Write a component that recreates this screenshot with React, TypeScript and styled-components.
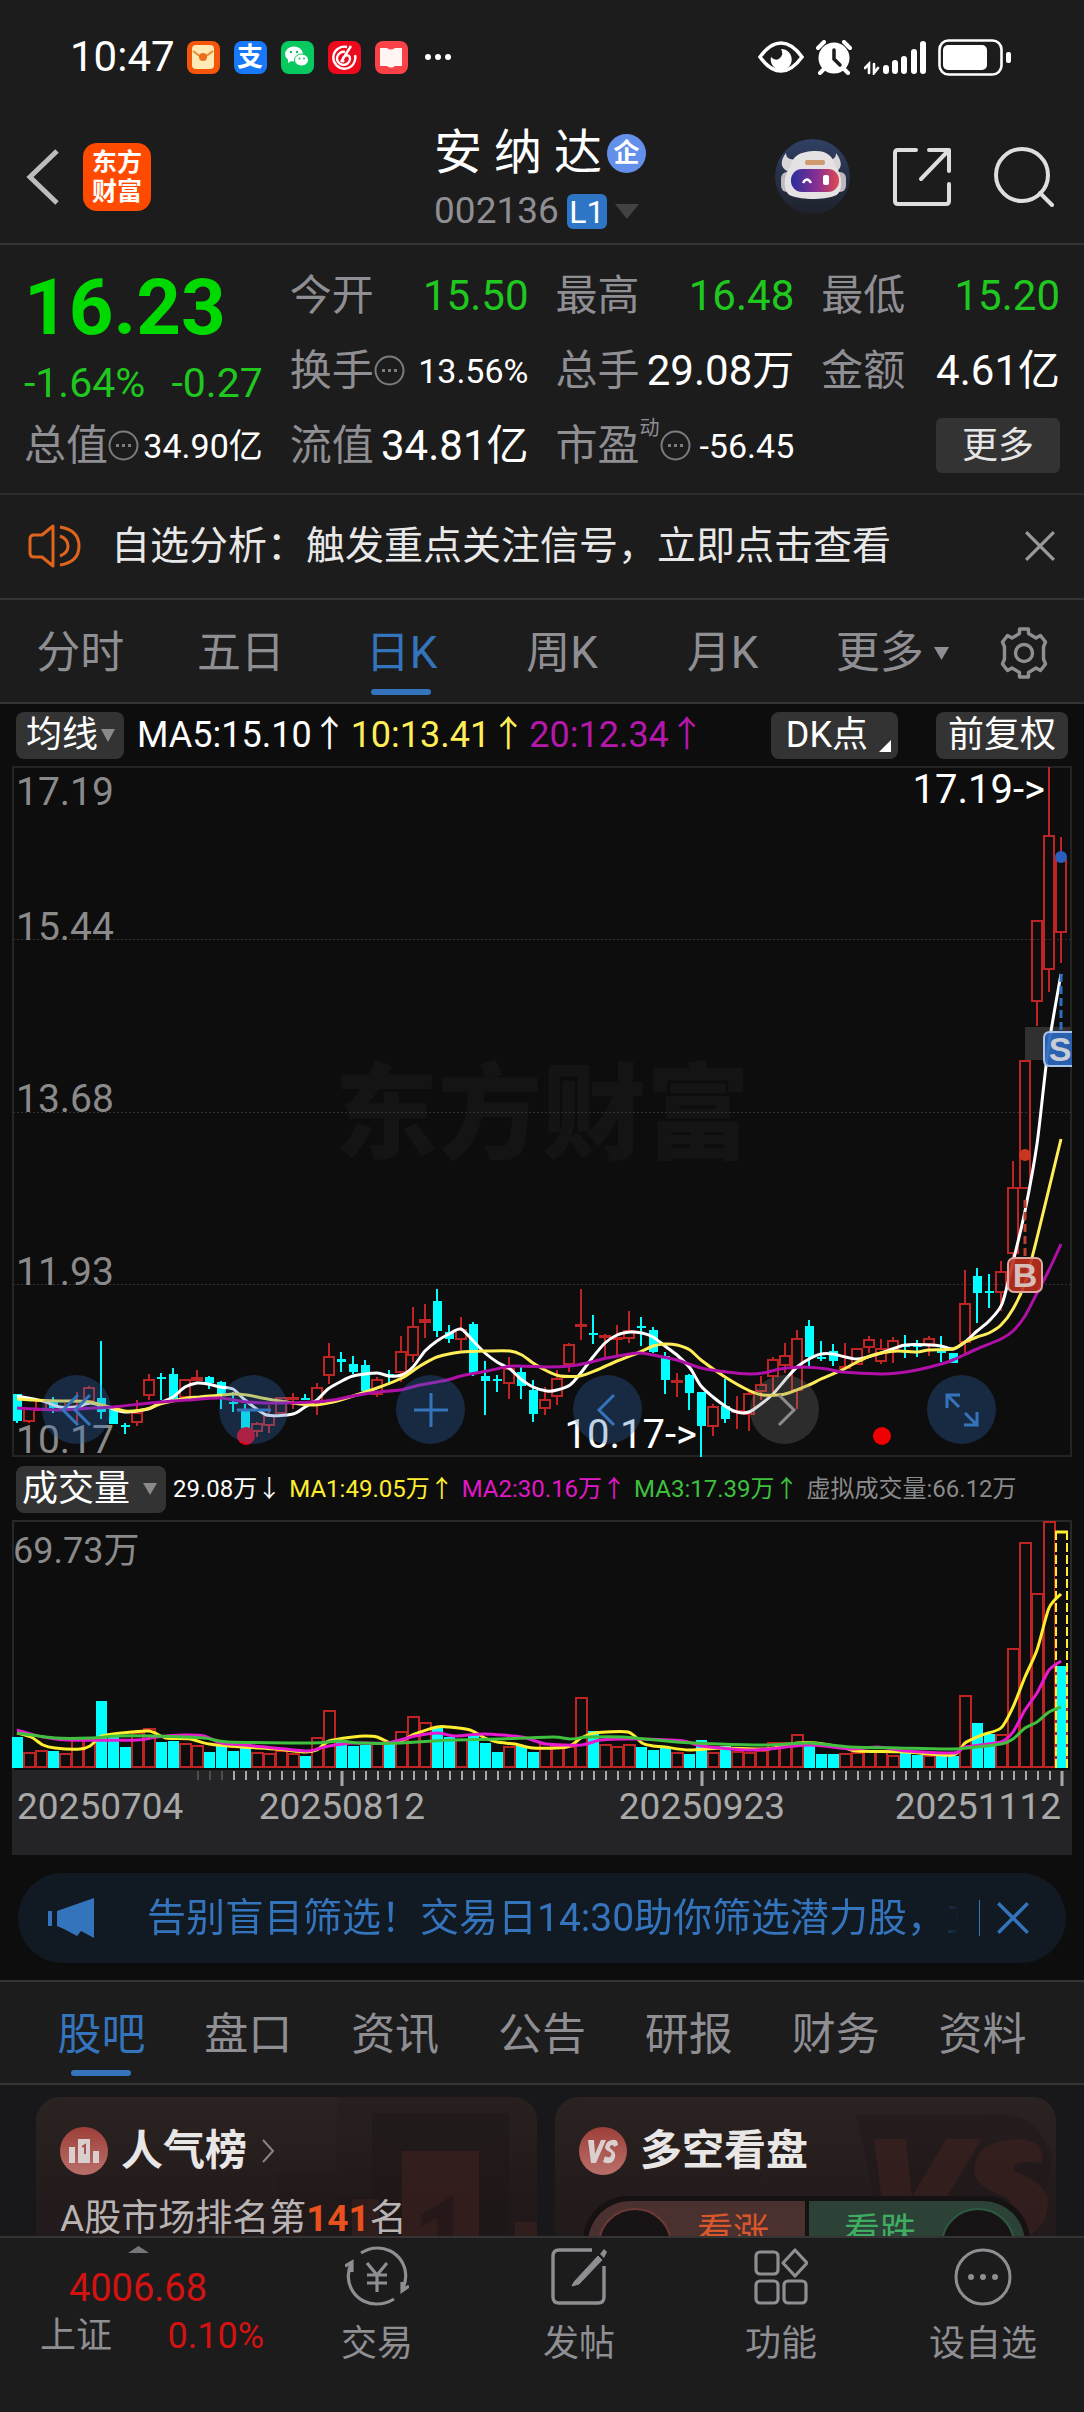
import React from "react";
import styled, { createGlobalStyle } from "styled-components";

const Global = createGlobalStyle`
  *, *::before, *::after { box-sizing: border-box; }
  body { margin: 0; background: #1c1c1c; }
  button { border: 0; padding: 0; background: none; color: inherit; font: inherit; cursor: pointer; }
  svg { display: block; flex: none; }
  h1, h2, p { margin: 0; font-weight: 400; }
`;

const C = {
  bar: "#1c1c1c",
  dark: "#0d0d0d",
  line: "#343434",
  label: "#8e8e93",
  green: "#1fc71f",
  red: "#d31212",
  blue: "#3474bc",
  cyan: "#00ffff",
  candle: "#bf2424",
};

const Screen = styled.div`
  min-height: 100vh;
  display: flex;
  flex-direction: column;
  background: ${C.bar};
  color: #fff;
  font-family: Roboto, "Noto Sans CJK SC", sans-serif;
  font-size: 36px;
  line-height: 48px;
  overflow-x: hidden;
  white-space: nowrap;
`;

/* ---------- status bar ---------- */
const StatusBar = styled.div`
  height: 110px;
  padding: 4px 73px 0 70px;
  display: flex;
  align-items: center;
  justify-content: space-between;
  font-size: 42px;
`;
const StatusGroup = styled.div<{ $gap: number }>`
  display: flex;
  align-items: center;
  gap: ${(p) => p.$gap}px;
`;
const AppTile = styled.span<{ $bg: string }>`
  width: 33px;
  height: 33px;
  border-radius: 8px;
  background: ${(p) => p.$bg};
  display: flex;
  align-items: center;
  justify-content: center;
  font-size: 26px;
  line-height: 33px;
  font-weight: 700;
`;

/* ---------- header ---------- */
const Header = styled.header`
  height: 135px;
  padding: 0 30px 0 26px;
  display: grid;
  grid-template-columns: 1fr auto 1fr;
  align-items: center;
  border-bottom: 2px solid ${C.line};
`;
const HeaderSide = styled.div<{ $end?: boolean; $gap: number }>`
  display: flex;
  align-items: center;
  justify-content: ${(p) => (p.$end ? "flex-end" : "flex-start")};
  gap: ${(p) => p.$gap}px;
`;
const Logo = styled.div`
  width: 68px;
  height: 68px;
  border-radius: 14px;
  background: #ff4a00;
  font-size: 25px;
  line-height: 29px;
  font-weight: 700;
  display: flex;
  flex-direction: column;
  align-items: center;
  justify-content: center;
`;
const TitleBlock = styled.div`
  display: flex;
  flex-direction: column;
  padding-top: 11px;
`;
const TitleRow = styled.div`
  display: flex;
  align-items: center;
  gap: 5px;
  height: 58px;
  h1 { font-size: 48px; line-height: 58px; }
`;
const CodeRow = styled.button`
  display: flex;
  align-items: center;
  gap: 8px;
  height: 58px;
  font-size: 37px;
  color: ${C.label};
`;
const Enterprise = styled.span`
  width: 39px;
  height: 39px;
  border-radius: 50%;
  background: #6390ea;
  text-align: center;
  font-size: 26px;
  line-height: 38px;
  font-weight: 700;
`;
const Level = styled.span`
  width: 40px;
  height: 35px;
  border-radius: 6px;
  background: #2e75c5;
  color: #fff;
  font-size: 32px;
  line-height: 36px;
`;

/* ---------- quote ---------- */
const Quote = styled.section`
  padding: 13px 24px 10px;
  display: grid;
  grid-template-columns: repeat(4, minmax(0, 1fr));
  grid-auto-rows: 75px;
  column-gap: 27px;
  border-bottom: 2px solid #2b2b2b;
`;
const PriceCell = styled.div`
  grid-row: span 2;
  display: flex;
  flex-direction: column;
  justify-content: space-between;
  color: #00d900;
`;
const Price = styled.strong`
  font-size: 78px;
  line-height: 100px;
  font-weight: 700;
`;
const Change = styled.div`
  display: flex;
  justify-content: space-between;
  font-size: 41px;
  line-height: 50px;
  color: ${C.green};
`;
const Cell = styled.div<{ $color?: string; $small?: boolean }>`
  display: flex;
  align-items: center;
  justify-content: space-between;
  color: ${(p) => p.$color ?? "#fff"};
  font-size: ${(p) => (p.$small ? 34 : 42)}px;
`;
const CellLabel = styled.span`
  display: flex;
  align-items: center;
  color: ${C.label};
  font-size: 42px;
  sup {
    align-self: flex-start;
    font-size: 20px;
    line-height: 20px;
    margin-top: -4px;
  }
`;
const MoreCell = styled.div`
  display: flex;
  align-items: center;
  justify-content: flex-end;
`;
const MoreButton = styled.button`
  width: 124px;
  height: 55px;
  border-radius: 6px;
  background: #333;
  color: #e6e6e6;
`;

/* ---------- notice ---------- */
const Notice = styled.section`
  height: 105px;
  padding: 0 28px 2px 28px;
  display: flex;
  align-items: center;
  gap: 29px;
  border-bottom: 2px solid ${C.line};
  color: #e8e8e8;
  font-size: 39px;
  p { flex: 1; }
`;

/* ---------- tabs ---------- */
const PeriodTabs = styled.nav`
  height: 104px;
  display: grid;
  grid-template-columns: repeat(6, 4fr) 3fr;
  border-bottom: 2px solid ${C.line};
`;
const TopicTabs = styled.nav`
  height: 105px;
  padding: 0 28px;
  display: grid;
  grid-template-columns: repeat(7, 1fr);
  border-top: 2px solid ${C.line};
  border-bottom: 2px solid ${C.line};
`;
const Tab = styled.button<{ $active?: boolean; $caret?: boolean }>`
  display: flex;
  align-items: center;
  justify-content: center;
  gap: 10px;
  position: relative;
  padding: 4px 0 0 ${(p) => (p.$caret ? 18 : 0)}px;
  font-size: 44px;
  color: ${(p) => (p.$active ? C.blue : C.label)};
  &::after {
    content: "";
    display: ${(p) => (p.$active ? "block" : "none")};
    position: absolute;
    left: 50%;
    bottom: 7px;
    width: 60px;
    height: 6px;
    margin-left: -30px;
    border-radius: 3px;
    background: ${C.blue};
  }
`;

/* ---------- chart ---------- */
const ChartArea = styled.section`
  background: ${C.dark};
`;
const Toolbar = styled.div`
  height: 62px;
  padding: 0 16px;
  display: flex;
  align-items: center;
`;
const Legend = styled.div<{ $gap: number; $size: number; $start: number }>`
  flex: 1;
  display: flex;
  align-items: center;
  gap: ${(p) => p.$gap}px;
  margin-left: ${(p) => p.$start}px;
  font-size: ${(p) => p.$size}px;
`;
const ToolbarEnd = styled.div`
  display: flex;
  gap: 38px;
`;
const Pill = styled.button<{ $pad: string; $gap?: number }>`
  height: 47px;
  padding: ${(p) => p.$pad};
  display: flex;
  align-items: center;
  gap: ${(p) => p.$gap ?? 0}px;
  border-radius: 8px;
  background: #333;
`;
const Tint = styled.span<{ $c: string }>`
  color: ${(p) => p.$c};
`;
const Plot = styled.div`
  position: relative;
  > svg { width: 100%; height: auto; }
`;
const PlotControls = styled.div`
  position: absolute;
  left: 0;
  right: 0;
  bottom: 14px;
  padding: 0 88px 0 42px;
  display: flex;
  justify-content: space-between;
`;
const Round = styled.button<{ $off?: boolean }>`
  width: 69px;
  height: 69px;
  border-radius: 50%;
  display: flex;
  align-items: center;
  justify-content: center;
  background: ${(p) => (p.$off ? "rgba(130,130,130,.27)" : "rgba(50,110,187,.3)")};
  color: ${(p) => (p.$off ? "#8c8c8c" : C.blue)};
`;

/* ---------- banner ---------- */
const BannerWrap = styled.div`
  padding: 18px 18px 17px;
  background: ${C.dark};
`;
const Banner = styled.div`
  height: 90px;
  padding: 0 36px 0 30px;
  display: flex;
  align-items: center;
  border-radius: 45px;
  background: #111a23;
  color: ${C.blue};
  font-size: 39px;
`;
const BannerText = styled.p`
  flex: 1;
  min-width: 0;
  margin-left: 53px;
  overflow: hidden;
  mask-image: linear-gradient(90deg, #000 calc(100% - 48px), transparent calc(100% - 8px));
`;
const BannerClose = styled.button`
  margin-left: 12px;
  padding-left: 16px;
  height: 36px;
  display: flex;
  align-items: center;
  border-left: 1px solid ${C.blue};
`;

/* ---------- cards ---------- */
const Cards = styled.section`
  flex: 1 0 151px;
  height: 151px;
  padding: 12px 28px 0 36px;
  display: grid;
  grid-template-columns: 1fr 1fr;
  gap: 18px;
  overflow: hidden;
  background: #18181a;
`;
const Card = styled.article`
  position: relative;
  height: 240px;
  padding: 28px 24px 0;
  border-radius: 24px;
  overflow: hidden;
  background: linear-gradient(#2b2321, #231b1b 110px);
`;
const CardArt = styled.svg`
  position: absolute;
  right: 0;
  top: 0;
`;
const CardHead = styled.div`
  position: relative;
  display: flex;
  align-items: center;
  gap: 13px;
  height: 52px;
  h2 { font-size: 42px; line-height: 48px; font-weight: 700; color: #e9e6e6; }
`;
const CardLine = styled.p`
  position: relative;
  margin-top: 18px;
  font-size: 37px;
  color: #b9b4b4;
  strong { color: #e8501e; font-weight: 700; }
`;
const Vote = styled.div`
  position: relative;
  margin: 19px 2px 0 4px;
  height: 90px;
  padding: 5px 5px 0;
  border-radius: 45px 45px 0 0;
  background: #161112;
  display: grid;
  grid-template-columns: 1fr 1fr;
  gap: 4px;
`;
const VoteSide = styled.button<{ $up?: boolean }>`
  display: flex;
  flex-direction: ${(p) => (p.$up ? "row" : "row-reverse")};
  align-items: flex-start;
  gap: 25px;
  padding: 7px 10px 0;
  overflow: hidden;
  border-radius: ${(p) => (p.$up ? "42px 0 0 0" : "0 42px 0 0")};
  background: ${(p) => (p.$up ? "#4a302f" : "#2c4237")};
  color: ${(p) => (p.$up ? "#d9572b" : "#3fae62")};
  &::before {
    content: "";
    width: 74px;
    height: 74px;
    border-radius: 50%;
    border: 2px solid ${(p) => (p.$up ? "#6b3a36" : "#2b5a41")};
    background: #171314;
  }
`;

/* ---------- bottom bar ---------- */
const BottomBar = styled.footer`
  height: 176px;
  display: grid;
  grid-template-columns: 276fr repeat(4, 202fr);
  border-top: 2px solid ${C.line};
`;
const IndexBox = styled.button`
  display: flex;
  flex-direction: column;
  align-items: center;
  padding-top: 8px;
  color: ${C.red};
`;
const IndexValue = styled.span`
  margin-top: 11px;
  font-size: 38px;
`;
const IndexRow = styled.span`
  width: 100%;
  padding: 0 12px 0 40px;
  display: flex;
  justify-content: space-between;
`;
const NavItem = styled.button`
  display: flex;
  flex-direction: column;
  align-items: center;
  gap: 14px;
  padding-top: 8px;
  color: ${C.label};
`;

/* ---------- data ---------- */
// Candle: [up, bodyTop, bodyBottom, high, low] on the plot's vertical scale
type Candle = [number, number, number, number, number];
const candles: Candle[] = [
  [0, 1394, 1421, 1394, 1423], [1, 1408, 1422, 1408, 1423], [1, 1399, 1411, 1399, 1411], [0, 1402, 1408, 1397, 1413],
  [1, 1406, 1411, 1403, 1413], [1, 1405, 1408, 1392, 1423], [1, 1387, 1402, 1386, 1405], [0, 1398, 1412, 1341, 1419],
  [0, 1409, 1424, 1408, 1424], [0, 1425, 1426, 1423, 1434], [1, 1412, 1423, 1400, 1426], [1, 1379, 1396, 1374, 1400],
  [0, 1377, 1379, 1373, 1400], [0, 1374, 1399, 1368, 1400], [1, 1379, 1398, 1379, 1398], [1, 1377, 1381, 1370, 1381],
  [0, 1377, 1383, 1376, 1389], [0, 1382, 1395, 1381, 1409], [0, 1402, 1404, 1392, 1412], [0, 1411, 1432, 1404, 1432],
  [1, 1423, 1432, 1422, 1437], [1, 1415, 1426, 1405, 1433], [1, 1397, 1414, 1397, 1414], [1, 1397, 1398, 1393, 1409],
  [0, 1398, 1400, 1394, 1400], [1, 1387, 1402, 1383, 1415], [1, 1356, 1376, 1343, 1384], [0, 1359, 1362, 1352, 1372],
  [0, 1364, 1372, 1356, 1374], [0, 1365, 1391, 1360, 1391], [1, 1379, 1395, 1377, 1397], [0, 1374, 1376, 1370, 1385],
  [1, 1351, 1373, 1336, 1382], [1, 1326, 1356, 1307, 1362], [1, 1319, 1323, 1304, 1338], [0, 1301, 1331, 1289, 1337],
  [0, 1332, 1339, 1325, 1343], [1, 1329, 1340, 1317, 1350], [0, 1324, 1374, 1322, 1376], [0, 1376, 1381, 1361, 1415],
  [0, 1379, 1381, 1375, 1392], [1, 1368, 1384, 1357, 1399], [0, 1372, 1386, 1367, 1399], [0, 1390, 1414, 1380, 1422],
  [1, 1399, 1409, 1387, 1415], [1, 1378, 1397, 1370, 1405], [1, 1344, 1365, 1343, 1372], [1, 1324, 1327, 1289, 1340],
  [0, 1333, 1335, 1315, 1344], [1, 1335, 1336, 1334, 1357], [1, 1337, 1340, 1325, 1355], [1, 1330, 1339, 1311, 1343],
  [0, 1326, 1328, 1317, 1346], [0, 1330, 1352, 1327, 1353], [0, 1356, 1380, 1352, 1394], [1, 1380, 1382, 1373, 1397],
  [0, 1375, 1393, 1374, 1410], [0, 1392, 1426, 1392, 1457], [1, 1406, 1427, 1404, 1436], [0, 1406, 1419, 1379, 1423],
  [1, 1410, 1411, 1396, 1429], [1, 1393, 1415, 1391, 1431], [1, 1384, 1392, 1376, 1400], [1, 1359, 1377, 1357, 1392],
  [1, 1355, 1366, 1343, 1373], [1, 1338, 1391, 1330, 1409], [0, 1326, 1357, 1320, 1366], [0, 1357, 1359, 1341, 1361],
  [0, 1351, 1361, 1344, 1366], [1, 1366, 1367, 1343, 1370], [1, 1348, 1365, 1348, 1365], [1, 1339, 1348, 1336, 1353],
  [1, 1348, 1362, 1339, 1364], [1, 1340, 1350, 1337, 1363], [0, 1344, 1347, 1335, 1358], [0, 1345, 1347, 1340, 1357],
  [1, 1338, 1345, 1336, 1356], [0, 1350, 1353, 1336, 1362], [0, 1353, 1363, 1353, 1363], [1, 1303, 1343, 1270, 1355],
  [0, 1276, 1293, 1268, 1323], [0, 1291, 1293, 1274, 1308], [1, 1271, 1293, 1261, 1311], [1, 1187, 1254, 1161, 1270],
  [1, 1060, 1189, 1060, 1189], [1, 920, 1002, 920, 1026], [1, 835, 970, 767, 992], [1, 859, 933, 837, 963],
];
const closes = candles.map((c) => c[0]);

const volumes = [
  1737, 1752, 1750, 1751, 1753, 1739, 1739, 1701, 1737, 1747, 1732, 1728, 1742, 1741, 1743, 1745, 1752, 1746, 1751, 1744,
  1752, 1753, 1750, 1753, 1756, 1737, 1710, 1740, 1746, 1745, 1743, 1741, 1731, 1716, 1722, 1728, 1737, 1739, 1735, 1743,
  1752, 1746, 1746, 1752, 1743, 1746, 1746, 1697, 1731, 1744, 1746, 1744, 1747, 1750, 1748, 1752, 1754, 1740, 1752, 1746,
  1751, 1752, 1750, 1742, 1742, 1734, 1743, 1754, 1754, 1753, 1752, 1750, 1750, 1755, 1752, 1755, 1755, 1755, 1756, 1695,
  1723, 1734, 1734, 1648, 1542, 1593, 1521, 1666,
];

type Pt = [number, number];
const ma5: Pt[] = [
  [17, 1396], [43, 1401], [60, 1407], [77, 1407], [90, 1403], [107, 1407], [125, 1412], [148, 1409], [160, 1403], [173, 1397],
  [185, 1387], [197, 1383], [208, 1384], [220, 1387], [233, 1389], [245, 1400], [267, 1415], [293, 1414], [305, 1407],
  [317, 1400], [328, 1389], [340, 1382], [353, 1376], [377, 1373], [389, 1376], [402, 1375], [413, 1367], [425, 1351],
  [437, 1341], [449, 1334], [461, 1329], [475, 1343], [485, 1353], [497, 1362], [510, 1369], [522, 1380], [533, 1387],
  [547, 1391], [557, 1390], [570, 1385], [580, 1374], [593, 1357], [605, 1343], [617, 1335], [630, 1332], [642, 1333],
  [653, 1337], [665, 1346], [677, 1355], [690, 1368], [701, 1386], [713, 1397], [725, 1406], [737, 1412], [749, 1412],
  [761, 1404], [773, 1394], [785, 1380], [797, 1367], [809, 1359], [821, 1354], [833, 1354], [857, 1359], [881, 1353],
  [905, 1345], [929, 1345], [941, 1346], [953, 1349], [965, 1342], [977, 1331], [989, 1321], [1002, 1304], [1013, 1262],
  [1025, 1211], [1037, 1144], [1048, 1050], [1061, 974],
];
const ma10: Pt[] = [
  [17, 1399], [33, 1400], [60, 1401], [90, 1402], [125, 1411], [147, 1409], [160, 1404], [187, 1398], [200, 1397],
  [233, 1394], [247, 1395], [273, 1400], [313, 1405], [333, 1402], [353, 1396], [377, 1388], [402, 1378], [420, 1366],
  [437, 1357], [461, 1352], [487, 1351], [510, 1351], [522, 1355], [533, 1363], [547, 1371], [560, 1376], [580, 1376],
  [597, 1370], [617, 1361], [640, 1352], [653, 1346], [665, 1344], [677, 1345], [690, 1350], [701, 1360], [725, 1377],
  [750, 1391], [763, 1395], [785, 1394], [809, 1385], [821, 1379], [842, 1370], [857, 1362], [870, 1356], [881, 1353],
  [898, 1351], [917, 1352], [929, 1350], [953, 1349], [965, 1342], [977, 1337], [989, 1333], [1001, 1325], [1013, 1309],
  [1025, 1283], [1037, 1238], [1061, 1139],
];
const ma20: Pt[] = [
  [17, 1408], [60, 1410], [93, 1408], [113, 1407], [150, 1403], [187, 1400], [220, 1398], [247, 1402], [277, 1403],
  [313, 1402], [333, 1400], [353, 1396], [377, 1392], [400, 1390], [420, 1385], [447, 1380], [461, 1376], [487, 1371],
  [513, 1366], [547, 1367], [570, 1366], [587, 1363], [607, 1358], [637, 1353], [653, 1355], [677, 1360], [701, 1368],
  [727, 1372], [750, 1374], [763, 1373], [780, 1369], [803, 1367], [827, 1369], [842, 1372], [881, 1374], [898, 1373],
  [917, 1370], [941, 1364], [953, 1360], [977, 1349], [1001, 1339], [1013, 1331], [1025, 1316], [1037, 1293], [1049, 1270],
  [1061, 1244],
];
const vma1: Pt[] = [
  [17, 1733], [31, 1737], [43, 1745], [55, 1748], [80, 1749], [90, 1746], [102, 1736], [121, 1733], [149, 1731], [166, 1738],
  [190, 1739], [209, 1744], [242, 1747], [276, 1749], [305, 1752], [317, 1750], [329, 1741], [353, 1737], [365, 1736],
  [377, 1737], [391, 1743], [401, 1741], [415, 1734], [437, 1727], [449, 1727], [470, 1730], [485, 1738], [497, 1742],
  [515, 1744], [533, 1748], [567, 1747], [581, 1738], [595, 1733], [628, 1732], [642, 1743], [653, 1746], [665, 1747],
  [689, 1750], [725, 1748], [767, 1749], [797, 1743], [816, 1743], [845, 1748], [857, 1751], [905, 1752], [953, 1755],
  [965, 1743], [982, 1735], [1001, 1728], [1013, 1707], [1025, 1677], [1037, 1650], [1049, 1608], [1061, 1594],
];
const vma2: Pt[] = [
  [17, 1730], [43, 1737], [69, 1740], [138, 1740], [156, 1737], [183, 1735], [204, 1736], [221, 1743], [245, 1745],
  [305, 1751], [317, 1749], [329, 1746], [353, 1743], [387, 1743], [415, 1736], [437, 1733], [456, 1736], [484, 1734],
  [522, 1737], [546, 1744], [581, 1745], [601, 1740], [636, 1739], [684, 1741], [701, 1746], [753, 1750], [809, 1745],
  [850, 1749], [878, 1747], [906, 1751], [954, 1753], [965, 1747], [1001, 1742], [1013, 1732], [1025, 1710], [1037, 1693],
  [1049, 1670], [1061, 1661],
];
const vma3: Pt[] = [
  [17, 1733], [55, 1738], [90, 1738], [118, 1736], [152, 1736], [204, 1738], [228, 1742], [311, 1743], [339, 1741],
  [360, 1743], [401, 1743], [449, 1740], [498, 1739], [553, 1737], [570, 1739], [588, 1737], [622, 1737], [677, 1742],
  [719, 1744], [767, 1745], [809, 1743], [850, 1747], [899, 1748], [954, 1749], [1001, 1744], [1013, 1739], [1025, 1728],
  [1037, 1722], [1049, 1712], [1061, 1707],
];

const xAt = (i: number) => 17 + 12 * i;

// Catmull-Rom spline through the points
const curve = (pts: Pt[]) => {
  let d = `M${pts[0][0]} ${pts[0][1]}`;
  for (let i = 0; i < pts.length - 1; i++) {
    const a = pts[Math.max(i - 1, 0)];
    const b = pts[i];
    const c = pts[i + 1];
    const e = pts[Math.min(i + 2, pts.length - 1)];
    const r = (n: number) => Math.round(n * 10) / 10;
    d += `C${r(b[0] + (c[0] - a[0]) / 8)} ${r(b[1] + (c[1] - a[1]) / 8)} ${r(c[0] - (e[0] - b[0]) / 8)} ${r(
      c[1] - (e[1] - b[1]) / 8
    )} ${c[0]} ${c[1]}`;
  }
  return d;
};

const Curve = ({ pts, color }: { pts: Pt[]; color: string }) => (
  <path d={curve(pts)} fill="none" stroke={color} strokeWidth="3" strokeLinejoin="round" />
);

const CandleMark = ({ c, i }: { c: Candle; i: number }) => {
  const [up, top, bottom, high, low] = c;
  const x = xAt(i);
  if (!up)
    return (
      <g fill={C.cyan}>
        <rect x={x - 1} y={high} width="2" height={low - high} />
        <rect x={x - 4} y={top} width="9" height={Math.max(bottom - top, 2)} />
      </g>
    );
  return (
    <g fill="none" stroke={C.candle} strokeWidth="2">
      <path d={`M${x} ${high}V${top}M${x} ${bottom}V${low}`} />
      <rect x={x - 5} y={top + 1} width="10" height={Math.max(bottom - top - 2, 1)} />
    </g>
  );
};

const PriceChart = () => (
  <svg viewBox="0 766 1084 692" role="img" aria-label="日K">
    <text x="542" y="1151" textAnchor="middle" fontSize="104" fontWeight="900" fill="#141414">东方财富</text>
    <rect x="13" y="767" width="1058" height="689" fill="none" stroke="#242424" strokeWidth="2" />
    {[939, 1112, 1284].map((y) => (
      <path key={y} d={`M13 ${y}.5H1071`} stroke="#333" strokeDasharray="2 2" />
    ))}
    <g fontSize="39" fill="#8a8a8a">
      <text x="16" y="805">17.19</text>
      <text x="16" y="940">15.44</text>
      <text x="16" y="1112">13.68</text>
      <text x="16" y="1285">11.93</text>
      <text x="16" y="1453">10.17</text>
    </g>
    <rect x="1025" y="1027" width="46" height="33" fill="#303030" />
    {candles.map((c, i) => (
      <CandleMark key={i} c={c} i={i} />
    ))}
    <g fill="#fff" fontSize="40" textAnchor="end">
      <text x="1045" y="803">17.19-&gt;</text>
      <text x="697" y="1448">10.17-&gt;</text>
    </g>
    <Curve pts={ma5} color="#fff" />
    <Curve pts={ma10} color="#ffee58" />
    <Curve pts={ma20} color="#b010a8" />
    <circle cx="1061" cy="857" r="6" fill="#2a5fc0" />
    <circle cx="1025" cy="1155" r="6" fill="#c8361f" />
    <path d="M1061 974V1031" stroke="#2e6cc0" strokeWidth="3" strokeDasharray="8 4" />
    <path d="M1025 1200V1257" stroke="#b8402c" strokeWidth="3" strokeDasharray="8 4" />
    <g fontFamily="Liberation Sans, sans-serif" fontWeight="700" fontSize="34" textAnchor="middle" fill="#c9cdd6">
      <path d="M1072 1032H1050q-6 0 -6 6V1060q0 6 6 6H1072" fill="#2a66bd" fillOpacity=".92" stroke="#a9c4e8" strokeWidth="2" />
      <text x="1060" y="1061">S</text>
      <rect x="1008" y="1258" width="34" height="34" rx="6" fill="#bd3021" fillOpacity=".9" stroke="#dba9a0" strokeWidth="2" />
      <text x="1025" y="1287" fill="#d8beb9">B</text>
    </g>
    <circle cx="246" cy="1436" r="9" fill="#e60012" />
    <circle cx="882" cy="1436" r="9" fill="#ee0000" />
  </svg>
);

const VolumeChart = () => (
  <svg viewBox="0 1520 1084 335" role="img" aria-label="成交量">
    <path d="M13 1770V1521H1071V1770" fill="none" stroke="#282828" strokeWidth="2" />
    <text x="13" y="1563" fontSize="36" fill="#8a8a8a">69.73万</text>
    {volumes.map((top, i) =>
      closes[i] ? (
        <rect key={i} x={xAt(i) - 5} y={top + 1} width="11" height={1766 - top} fill="none" stroke={C.candle} strokeWidth="2" />
      ) : (
        <rect key={i} x={xAt(i) - 5} y={top} width="11" height={1768 - top} fill={C.cyan} />
      )
    )}
    <rect x="1055" y="1532" width="13" height="134" fill="#0d0d0d" />
    <path d="M1056 1768V1532M1067 1768V1532" stroke="#ffee30" strokeWidth="2" strokeDasharray="9 3" />
    <path d="M1055 1532H1068" stroke="#ffee30" strokeWidth="3" />
    <rect x="1057" y="1666" width="9" height="102" fill={C.cyan} />
    <Curve pts={vma1} color="#ffee30" />
    <Curve pts={vma2} color="#e81ad0" />
    <Curve pts={vma3} color="#3fc03f" />
    <rect x="12" y="1770" width="1060" height="85" fill="#242426" />
    {Array.from({ length: 73 }, (_, k) => k + 15).map((i) => {
      const major = i === 27 || i === 57 || i === 87;
      return (
        <path
          key={i}
          d={`M${xAt(i) + 1} 1771V${major ? 1786 : 1780}`}
          stroke="#a8a8a8"
          strokeWidth={major ? 3 : 2}
          opacity={i < 18 ? 0.3 : 1}
        />
      );
    })}
    <g fontSize="37" fill="#a9a9a9">
      <text x="17" y="1819">20250704</text>
      <text x="342" y="1819" textAnchor="middle">20250812</text>
      <text x="702" y="1819" textAnchor="middle">20250923</text>
      <text x="1061" y="1819" textAnchor="end">20251112</text>
    </g>
  </svg>
);

/* ---------- icons ---------- */
const Arrow = ({ w, h, color, up }: { w: number; h: number; color: string; up?: boolean }) => (
  <svg width={w} height={h} viewBox="0 0 10 10" preserveAspectRatio="none">
    <path d={up ? "M0 10L5 0L10 10Z" : "M0 0H10L5 10Z"} fill={color} />
  </svg>
);
const Cross = ({ s, color, w = 3 }: { s: number; color: string; w?: number }) => (
  <svg width={s} height={s} viewBox="0 0 30 30" stroke={color} strokeWidth={w}>
    <path d="M2 2L28 28M28 2L2 28" />
  </svg>
);
const Info = () => (
  <svg width="31" height="31" viewBox="0 0 31 31" fill="none" stroke="#7c7c80" strokeWidth="2">
    <circle cx="15.5" cy="15.5" r="14" />
    <path d="M8 15.5h3M14 15.5h3M20 15.5h3" strokeWidth="3" />
  </svg>
);
const Robot = () => (
  <svg width="75" height="75" viewBox="0 0 75 75">
    <defs>
      <linearGradient id="sky" x2="0" y2="1"><stop stopColor="#2f4063" /><stop offset="1" stopColor="#1e222b" /></linearGradient>
      <linearGradient id="visor"><stop stopColor="#2a2f9c" /><stop offset=".55" stopColor="#8a2f92" /><stop offset="1" stopColor="#e04a52" /></linearGradient>
    </defs>
    <circle cx="37.5" cy="37.5" r="37.5" fill="url(#sky)" />
    <path d="M11 14Q2 26 12 32L20 30L22 20Q11 22 11 14ZM61 14Q70 26 62 32L54 30L52 20Q61 22 61 14Z" fill="#d9d6d9" />
    <rect x="6" y="33" width="12" height="20" rx="6" fill="#bdb9bf" />
    <rect x="59" y="33" width="12" height="20" rx="6" fill="#bdb9bf" />
    <path d="M38 12c14-1 20 5 23 16 4 5 6 12 5 20-1 5-3 8-7 9-10 4-32 4-42 0-4-1-6-4-7-9-1-8 1-15 5-20 3-11 9-15 23-16z" fill="#e6e2e3" />
    <rect x="30" y="21" width="20" height="5" rx="2" fill="#cf9a70" />
    <rect x="16" y="30" width="48" height="23" rx="11" fill="url(#visor)" />
    <path d="M28 44q4-7 8 0" fill="none" stroke="#fff" strokeWidth="2.4" />
    <rect x="48" y="36" width="6" height="10" rx="2" fill="#fff" />
  </svg>
);
const Share = () => (
  <svg width="58" height="58" viewBox="0 0 58 58" fill="none" stroke="#dedede" strokeWidth="4" strokeLinejoin="round">
    <path d="M23 2H5Q2 2 2 5V53Q2 56 5 56H53Q56 56 56 53V36M36 2H56V23M54 4L28 31" strokeLinecap="round" />
  </svg>
);
const Search = () => (
  <svg width="60" height="60" viewBox="0 0 60 60" fill="none" stroke="#dedede" strokeWidth="4" strokeLinecap="round">
    <circle cx="28" cy="28" r="26" />
    <path d="M46 46L58 58" />
  </svg>
);
const Gear = () => (
  <svg width="52" height="52" viewBox="0 0 52 52" fill="none" stroke={C.label} strokeWidth="3.4" strokeLinejoin="round">
    <path d="M21.5 2H30.5V6.5L38 11L42.5 8.5L47.5 15L45.5 20V32L47.5 37L42.5 43.5L38 41L30.5 45.5V50H21.5V45.5L14 41L9.5 43.5L4.5 37L6.5 32V20L4.5 15L9.5 8.5L14 11L21.5 6.5Z" />
    <circle cx="26" cy="26" r="8.5" />
  </svg>
);

export default function App() {
  return (
    <Screen>
      <Global />
      <StatusBar>
        <StatusGroup $gap={12}>
          <span>10:47</span>
          <StatusGroup $gap={14}>
            <AppTile $bg="#f4570c">
              <svg width="22" height="24" viewBox="0 0 22 24"><rect width="22" height="24" rx="4" fill="#ffe9b5" /><path d="M1 6L9 12M21 6L13 12" stroke="#e88a30" strokeWidth="2" /><circle cx="11" cy="12" r="4" fill="#e8701c" /></svg>
            </AppTile>
            <AppTile $bg="#1778f8">支</AppTile>
            <AppTile $bg="#08c860">
              <svg width="24" height="22" viewBox="0 0 24 22" fill="#fff"><ellipse cx="9" cy="8" rx="9" ry="7.5" /><path d="M3 12l0 5 5-3z" /><ellipse cx="16.5" cy="14" rx="7" ry="6" stroke="#08c860" /><g fill="#08c860"><circle cx="6" cy="6" r="1.2" /><circle cx="12" cy="6" r="1.2" /><circle cx="14.5" cy="12.5" r="1" /><circle cx="19" cy="12.5" r="1" /></g></svg>
            </AppTile>
            <AppTile $bg="#ec0a1c">
              <svg width="25" height="25" viewBox="0 0 25 25" fill="none" stroke="#fff" strokeWidth="2.4"><path d="M15 2A11 11 0 1 0 23 10M13 7A6.500 6.500 0 1 0 18 14Q18 9 13 11Q9 14 12 17M19 1L9 17" /></svg>
            </AppTile>
            <AppTile $bg="#fb4248">
              <svg width="22" height="21" viewBox="0 0 22 21"><path d="M0 1H7Q11 4 15 1H22V19H15Q11 22 7 19H0Z" fill="#fff5f2" /></svg>
            </AppTile>
          </StatusGroup>
          <svg width="36" height="8" viewBox="0 0 36 8" fill="#fff"><circle cx="8" cy="4" r="3" /><circle cx="18" cy="4" r="3" /><circle cx="28" cy="4" r="3" /></svg>
        </StatusGroup>
        <StatusGroup $gap={12}>
          <svg width="46" height="32" viewBox="0 0 46 32"><path d="M2 16Q12 2 23 2T44 16Q34 30 23 30T2 16Z" fill="none" stroke="#fff" strokeWidth="3.5" /><path d="M23 8a10.500 10.500 0 1 1-10 8q5 5 9 1t1-9z" fill="#fff" /></svg>
          <svg width="36" height="35" viewBox="0 0 36 35"><circle cx="18" cy="18" r="15.5" fill="#fff" /><path d="M2 8L8 2M34 8L28 2M8 29L4 33M28 29L32 33" stroke="#fff" strokeWidth="4" strokeLinecap="round" /><path d="M18 10V19L24 25" fill="none" stroke={C.bar} strokeWidth="3.5" strokeLinecap="round" /></svg>
          <svg width="62" height="35" viewBox="0 0 62 35" stroke="#fff" strokeWidth="6" strokeLinecap="round"><path d="M22 28V31M31 23V31M40 19V31M50 12V31M59 4V31" /><path d="M5 33V24L1 28M10 24V33L14 28" fill="none" strokeWidth="2.6" /></svg>
          <svg width="73" height="37" viewBox="0 0 73 37"><rect x="1.5" y="1.5" width="62" height="34" rx="9" fill="none" stroke="#fff" strokeWidth="2.6" /><rect x="5" y="6" width="44" height="25" rx="5" fill="#fff" /><rect x="68" y="13" width="5" height="11" rx="2" fill="#fff" /></svg>
        </StatusGroup>
      </StatusBar>

      <Header>
        <HeaderSide $gap={23}>
          <button aria-label="返回">
            <svg width="34" height="56" viewBox="0 0 34 56" fill="none" stroke="#bcbcbc" strokeWidth="5"><path d="M31 2L4 28L31 54" /></svg>
          </button>
          <Logo><span>东方</span><span>财富</span></Logo>
        </HeaderSide>
        <TitleBlock>
          <TitleRow><h1>安 纳 达</h1><Enterprise>企</Enterprise></TitleRow>
          <CodeRow><span>002136</span><Level>L1</Level><Arrow w={24} h={15} color="#424242" /></CodeRow>
        </TitleBlock>
        <HeaderSide $end $gap={43}>
          <button aria-label="助手"><Robot /></button>
          <button aria-label="分享"><Share /></button>
          <button aria-label="搜索"><Search /></button>
        </HeaderSide>
      </Header>

      <Quote>
        <PriceCell>
          <Price>16.23</Price>
          <Change><span>-1.64%</span><span>-0.27</span></Change>
        </PriceCell>
        <Cell $color={C.green}><CellLabel>今开</CellLabel>15.50</Cell>
        <Cell $color={C.green}><CellLabel>最高</CellLabel>16.48</Cell>
        <Cell $color={C.green}><CellLabel>最低</CellLabel>15.20</Cell>
        <Cell $small><CellLabel>换手<Info /></CellLabel>13.56%</Cell>
        <Cell><CellLabel>总手</CellLabel>29.08万</Cell>
        <Cell><CellLabel>金额</CellLabel>4.61亿</Cell>
        <Cell $small><CellLabel>总值<Info /></CellLabel>34.90亿</Cell>
        <Cell><CellLabel>流值</CellLabel>34.81亿</Cell>
        <Cell $small><CellLabel>市盈<sup>动</sup><Info /></CellLabel>-56.45</Cell>
        <MoreCell><MoreButton>更多</MoreButton></MoreCell>
      </Quote>

      <Notice>
        <svg width="54" height="46" viewBox="0 0 54 46" fill="none" stroke="#e0641c" strokeWidth="3" strokeLinejoin="round">
          <path d="M25 3L14 12H6Q2 12 2 16V30Q2 34 6 34H14L25 43ZM32 13Q40 16 40 23T32 33M32 4Q51 7 51 23T32 42" />
        </svg>
        <p>自选分析：触发重点关注信号，立即点击查看</p>
        <button aria-label="关闭提示"><Cross s={32} color="#9a9a9a" /></button>
      </Notice>

      <PeriodTabs>
        <Tab>分时</Tab>
        <Tab>五日</Tab>
        <Tab $active>日K</Tab>
        <Tab>周K</Tab>
        <Tab>月K</Tab>
        <Tab $caret>更多<Arrow w={15} h={13} color={C.label} /></Tab>
        <Tab aria-label="设置"><Gear /></Tab>
      </PeriodTabs>

      <ChartArea>
        <Toolbar>
          <Pill $pad="0 9px 0 10px" $gap={3}>均线<Arrow w={14} h={13} color="#8a8a8a" /></Pill>
          <Legend $gap={3} $size={36} $start={13}>
            <span>MA5:15.10↑</span>
            <Tint $c="#ffee58">10:13.41↑</Tint>
            <Tint $c="#b318aa">20:12.34↑</Tint>
          </Legend>
          <ToolbarEnd>
            <Pill $pad="0 7px 0 15px" $gap={11}>
              DK点
              <svg width="12" height="34" viewBox="0 0 12 34"><path d="M12 22V34H0Z" fill="#fff" /></svg>
            </Pill>
            <Pill $pad="0 12px">前复权</Pill>
          </ToolbarEnd>
        </Toolbar>
        <Plot>
          <PriceChart />
          <PlotControls>
            <Round aria-label="最早"><svg width="34" height="34" viewBox="0 0 34 34" fill="none" stroke="currentColor" strokeWidth="3"><path d="M18 2L3 17L18 32M30 2L15 17L30 32" /></svg></Round>
            <Round aria-label="缩小"><svg width="34" height="34" viewBox="0 0 34 34" stroke="currentColor" strokeWidth="3"><path d="M0 17H34" /></svg></Round>
            <Round aria-label="放大"><svg width="34" height="34" viewBox="0 0 34 34" stroke="currentColor" strokeWidth="3"><path d="M0 17H34M17 0V34" /></svg></Round>
            <Round aria-label="向左"><svg width="34" height="34" viewBox="0 0 34 34" fill="none" stroke="currentColor" strokeWidth="3"><path d="M23 2L8 17L23 32" /></svg></Round>
            <Round aria-label="向右" $off><svg width="34" height="34" viewBox="0 0 34 34" fill="none" stroke="currentColor" strokeWidth="3"><path d="M11 2L26 17L11 32" /></svg></Round>
            <Round aria-label="全屏"><svg width="34" height="34" viewBox="0 0 34 34" fill="none" stroke="currentColor" strokeWidth="3"><path d="M2 15V2H15M2 2L14 14M32 19V32H19M32 32L20 20" /></svg></Round>
          </PlotControls>
        </Plot>
        <Toolbar>
          <Pill $pad="0 9px 0 6px" $gap={13}>成交量<Arrow w={14} h={12} color="#8a8a8a" /></Pill>
          <Legend $gap={8} $size={24} $start={7}>
            <span>29.08万↓</span>
            <Tint $c="#ffee30">MA1:49.05万↑</Tint>
            <Tint $c="#e018c8">MA2:30.16万↑</Tint>
            <Tint $c="#3fc03f">MA3:17.39万↑</Tint>
            <Tint $c="#8a8a8a">虚拟成交量:66.12万</Tint>
          </Legend>
        </Toolbar>
        <Plot><VolumeChart /></Plot>
      </ChartArea>

      <BannerWrap>
        <Banner>
          <svg width="46" height="40" viewBox="0 0 46 40" fill={C.blue}><path d="M0 13h4v15H0zM9 13L46 0V40L33 33L29 38L16 31L9 28Z" /></svg>
          <BannerText>告别盲目筛选！交易日14:30助你筛选潜力股，立即查看</BannerText>
          <BannerClose aria-label="关闭"><Cross s={34} color={C.blue} /></BannerClose>
        </Banner>
      </BannerWrap>

      <TopicTabs>
        <Tab $active>股吧</Tab>
        <Tab>盘口</Tab>
        <Tab>资讯</Tab>
        <Tab>公告</Tab>
        <Tab>研报</Tab>
        <Tab>财务</Tab>
        <Tab>资料</Tab>
      </TopicTabs>

      <Cards>
        <Card>
          <CardArt width="260" height="150" viewBox="0 0 260 150">
            <path d="M0 150V75H60V0H260V150Z" fill="#1c1416" opacity=".15" />
            <path d="M60 150V100H95V16H232V150Z" fill="#1c1416" opacity=".4" />
            <path d="M125 150V54H202V150Z" fill="#4a2622" opacity=".45" />
            <path d="M144 118L176 98V150H160V120L144 130Z" fill="#1c1416" opacity=".5" />
            <path d="M75 150V102H102V150ZM238 150V125H260V150Z" fill="#3a2220" opacity=".6" />
          </CardArt>
          <CardHead>
            <svg width="48" height="48" viewBox="0 0 48 48">
              <defs><linearGradient id="badge" x2="0" y2="1"><stop stopColor="#9e3f3a" /><stop offset="1" stopColor="#b9706a" /></linearGradient></defs>
              <circle cx="24" cy="24" r="24" fill="url(#badge)" />
              <path d="M9 20h6v16H9zM18 12h12v24H18zM33 24h6v12h-6z" fill="#d8cfce" />
              <path d="M22 20L25 18V27" fill="none" stroke="#a5524c" strokeWidth="2" />
            </svg>
            <h2>人气榜</h2>
            <svg width="16" height="24" viewBox="0 0 16 24" fill="none" stroke="#8a8585" strokeWidth="2"><path d="M3 1L13 12L3 23" /></svg>
          </CardHead>
          <CardLine>A股市场排名第<strong>141</strong>名</CardLine>
        </Card>
        <Card>
          <CardArt width="260" height="150" viewBox="0 0 260 150">
            <path d="M60 18H190Q240 10 256 60L240 150H90Z" fill="#1c1416" opacity=".35" />
            <path d="M78 42H110L116 100L150 42H186L120 150H92Z" fill="#4a2622" opacity=".4" />
            <path d="M246 66Q250 42 220 42Q180 44 178 72Q178 90 210 100Q222 110 200 116Q180 118 172 112L164 140Q250 160 252 104Q250 86 218 74Q214 62 246 66Z" fill="#4a2622" opacity=".4" />
          </CardArt>
          <CardHead>
            <svg width="48" height="48" viewBox="0 0 48 48">
              <circle cx="24" cy="24" r="24" fill="url(#badge)" />
              <path d="M9 13h6l1 14 6-14h5L17 36h-5zM39 18q0-6-6-5t-7 7q0 3 5 5 3 2 0 5-3 1-5-1l-2 6q10 4 12-5 1-5-4-8-3-3 1-4 2 0 2 2z" fill="#d8cfce" />
            </svg>
            <h2>多空看盘</h2>
          </CardHead>
          <Vote>
            <VoteSide $up>看涨</VoteSide>
            <VoteSide>看跌</VoteSide>
          </Vote>
        </Card>
      </Cards>

      <BottomBar>
        <IndexBox>
          <Arrow w={21} h={7} color="#77777b" up />
          <IndexValue>4006.68</IndexValue>
          <IndexRow><Tint $c={C.label}>上证</Tint>0.10%</IndexRow>
        </IndexBox>
        <NavItem>
          <svg width="64" height="60" viewBox="0 0 64 60" fill="none" stroke={C.label} strokeWidth="3.2">
            <path d="M16 7Q24 2 32 2A28 28 0 0 1 58 42M49 53Q41 58 32 58A28 28 0 0 1 6 18M0 20L7 16V26M64 40L57 45V36" />
            <path d="M22 17L32 29L42 17M32 29V46M22 29H42M22 37H42" />
          </svg>
          交易
        </NavItem>
        <NavItem>
          <svg width="58" height="60" viewBox="0 0 58 60" fill="none" stroke={C.label} strokeWidth="3.4">
            <path d="M42 4H9Q3 4 3 10V51Q3 57 9 57H48Q54 57 54 51V20" />
            <path d="M24 36L48 10L52 14L29 38L22 40Z" fill={C.label} strokeWidth="1" />
            <path d="M50 8L54 3L57 6L54 12Z" fill={C.label} stroke="none" />
          </svg>
          发帖
        </NavItem>
        <NavItem>
          <svg width="54" height="60" viewBox="0 0 54 60" fill="none" stroke={C.label} strokeWidth="3.2">
            <rect x="2" y="6" width="22" height="22" rx="4" />
            <rect x="2" y="35" width="22" height="22" rx="4" />
            <rect x="30" y="35" width="22" height="22" rx="4" />
            <path d="M41 4L53 17L41 30L29 17Z" strokeLinejoin="round" />
          </svg>
          功能
        </NavItem>
        <NavItem>
          <svg width="58" height="60" viewBox="0 0 58 60" fill="none" stroke={C.label} strokeWidth="3">
            <circle cx="29" cy="31" r="27" />
            <g fill={C.label} stroke="none"><circle cx="17" cy="31" r="3" /><circle cx="29" cy="31" r="3" /><circle cx="41" cy="31" r="3" /></g>
          </svg>
          设自选
        </NavItem>
      </BottomBar>
    </Screen>
  );
}
